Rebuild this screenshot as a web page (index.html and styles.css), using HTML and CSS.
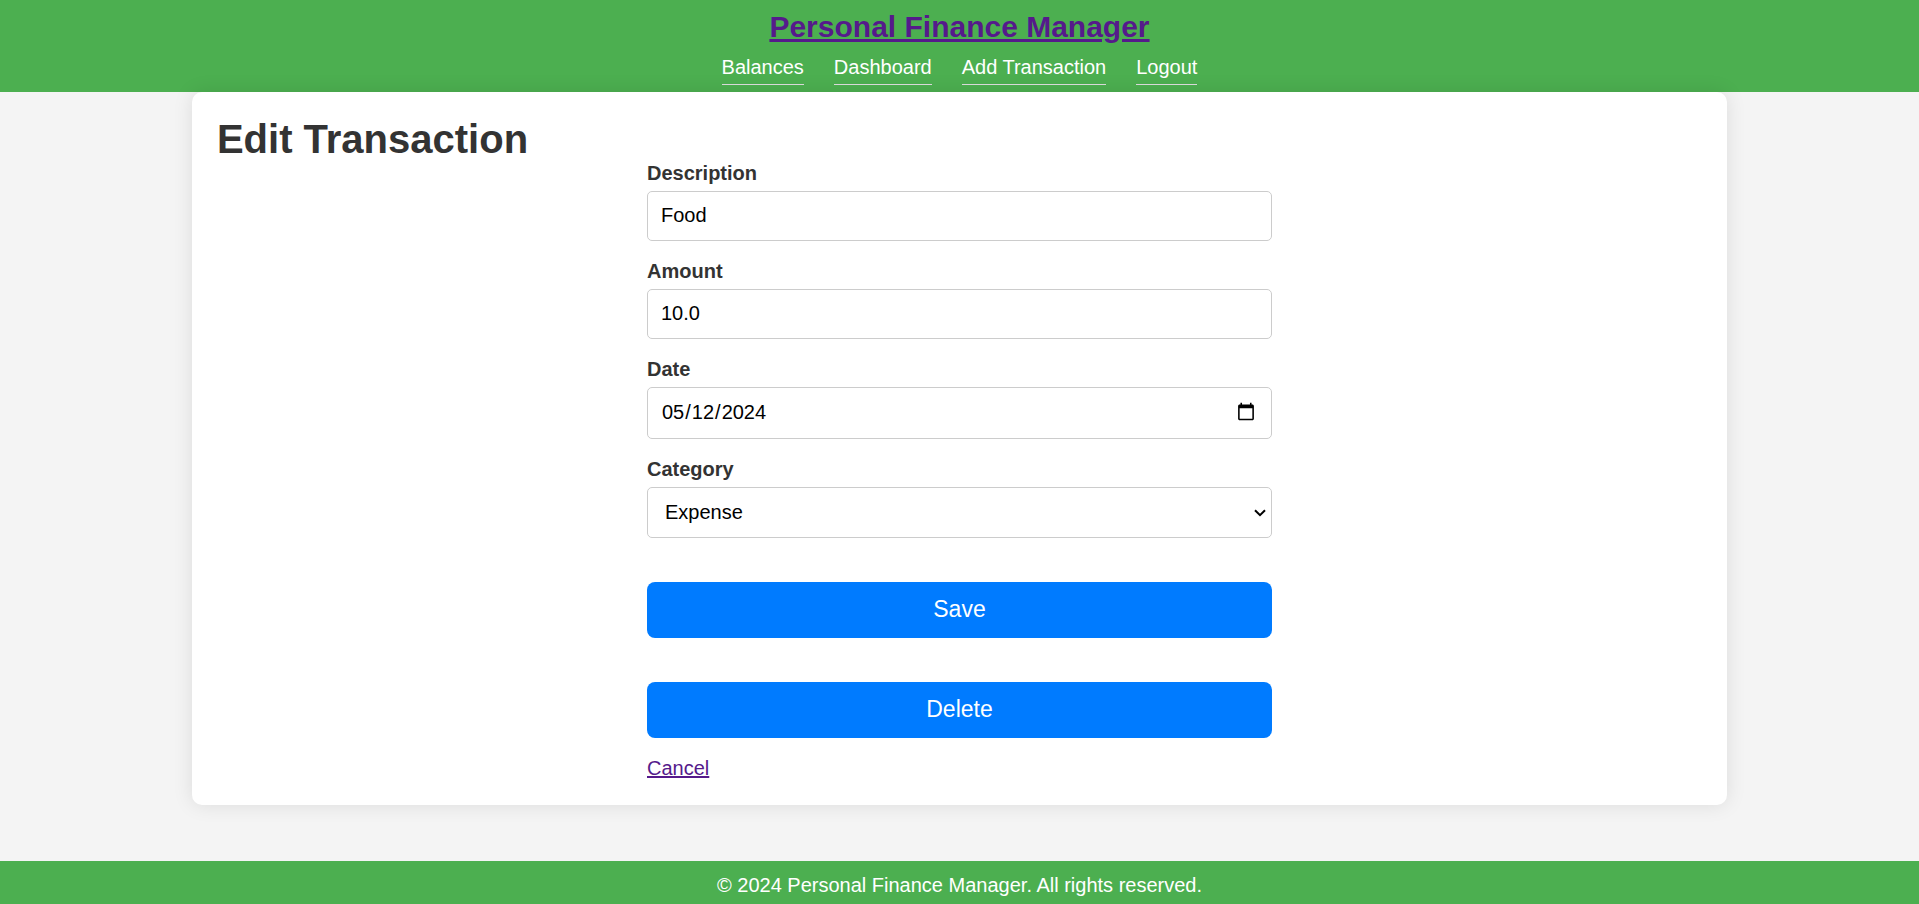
FILE: index.html
```html
<!DOCTYPE html>
<html lang="en">
<head>
<meta charset="utf-8">
<meta name="viewport" content="width=device-width, initial-scale=1">
<title>Edit Transaction - Personal Finance Manager</title>
<link rel="stylesheet" href="styles.css">
</head>
<body class="page">
<header class="site-header">
  <div class="brand"><a class="brand-link" href="#home">Personal Finance Manager</a></div>
  <nav class="site-nav">
    <a class="nav-link" href="#balances">Balances</a>
    <a class="nav-link" href="#dashboard">Dashboard</a>
    <a class="nav-link" href="#add">Add Transaction</a>
    <a class="nav-link" href="#logout">Logout</a>
  </nav>
</header>
<main class="card">
  <h1 class="card-title">Edit Transaction</h1>
  <form class="form">
    <div class="field">
      <label class="label" for="description">Description</label>
      <input class="control" type="text" id="description" value="Food">
    </div>
    <div class="field">
      <label class="label" for="amount">Amount</label>
      <input class="control" type="text" inputmode="decimal" id="amount" value="10.0">
    </div>
    <div class="field">
      <label class="label" for="date">Date</label>
      <input class="control control-date" type="date" id="date" value="2024-05-12">
    </div>
    <div class="field">
      <label class="label" for="category">Category</label>
      <div class="select-wrap">
        <select class="control control-select" id="category">
          <option selected>Expense</option>
          <option>Income</option>
        </select>
        <svg class="select-arrow" width="12" height="8" viewBox="0 0 12 8" aria-hidden="true"><path d="M1 1.2 6 6.2 11 1.2" fill="none" stroke="#000" stroke-width="2"/></svg>
      </div>
    </div>
    <button class="button" type="submit">Save</button>
    <button class="button" type="button">Delete</button>
    <a class="cancel" href="#cancel">Cancel</a>
  </form>
</main>
<footer class="site-footer">© 2024 Personal Finance Manager. All rights reserved.</footer>
</body>
</html>
```

FILE: styles.css
```css
* {
  box-sizing: border-box;
}

.page {
  display: flex;
  flex-direction: column;
  min-height: 100vh;
  margin: 0;
  background: #f4f4f4;
  color: #333;
  font-family: "Liberation Sans", Arial, sans-serif;
  font-size: 20px;
  line-height: 23px;
}

.site-header {
  display: flex;
  flex-direction: column;
  align-items: center;
  gap: 12px;
  padding: 10px 0 7px;
  background: #4caf50;
}

.brand {
  font-size: 30px;
  font-weight: bold;
  line-height: 34px;
}

.brand-link {
  color: #551a8b;
}

.site-nav {
  display: flex;
  gap: 30px;
}

.nav-link {
  padding-bottom: 5px;
  border-bottom: 1px solid #ddd;
  color: #fff;
  text-decoration: none;
}

.card {
  width: 80%;
  margin: 0 auto;
  padding: 25px;
  border-radius: 10px;
  background: #fff;
  box-shadow: 0 0 20px rgba(0, 0, 0, 0.1);
}

.card-title {
  margin: 0;
  font-size: 40px;
  line-height: 45px;
}

.form {
  display: flex;
  flex-direction: column;
  max-width: 625px;
  margin: 0 auto;
}

.field {
  display: flex;
  flex-direction: column;
  gap: 6px;
  margin-bottom: 19px;
}

.label {
  font-weight: bold;
}

.control {
  width: 100%;
  height: 50px;
  padding: 11px 13px 13px;
  border: 1px solid #ccc;
  border-radius: 5px;
  background-color: #fff;
  color: #000;
  font: inherit;
}

.control-date {
  height: 52px;
}

.select-wrap {
  display: flex;
  position: relative;
}

.control-select {
  height: 51px;
  padding: 12px 17px;
  appearance: none;
}

.select-arrow {
  position: absolute;
  top: 22px;
  right: 6px;
  pointer-events: none;
}

.button {
  height: 56px;
  margin: 25px 0 19px;
  padding: 0 0 2px;
  border: 0;
  border-radius: 8px;
  background: #007bff;
  color: #fff;
  font-family: inherit;
  font-size: 23px;
  cursor: pointer;
}

.cancel {
  align-self: flex-start;
  color: #551a8b;
}

.site-footer {
  margin-top: auto;
  padding: 13px 0 7px;
  background: #4caf50;
  color: #fff;
  text-align: center;
}
```
